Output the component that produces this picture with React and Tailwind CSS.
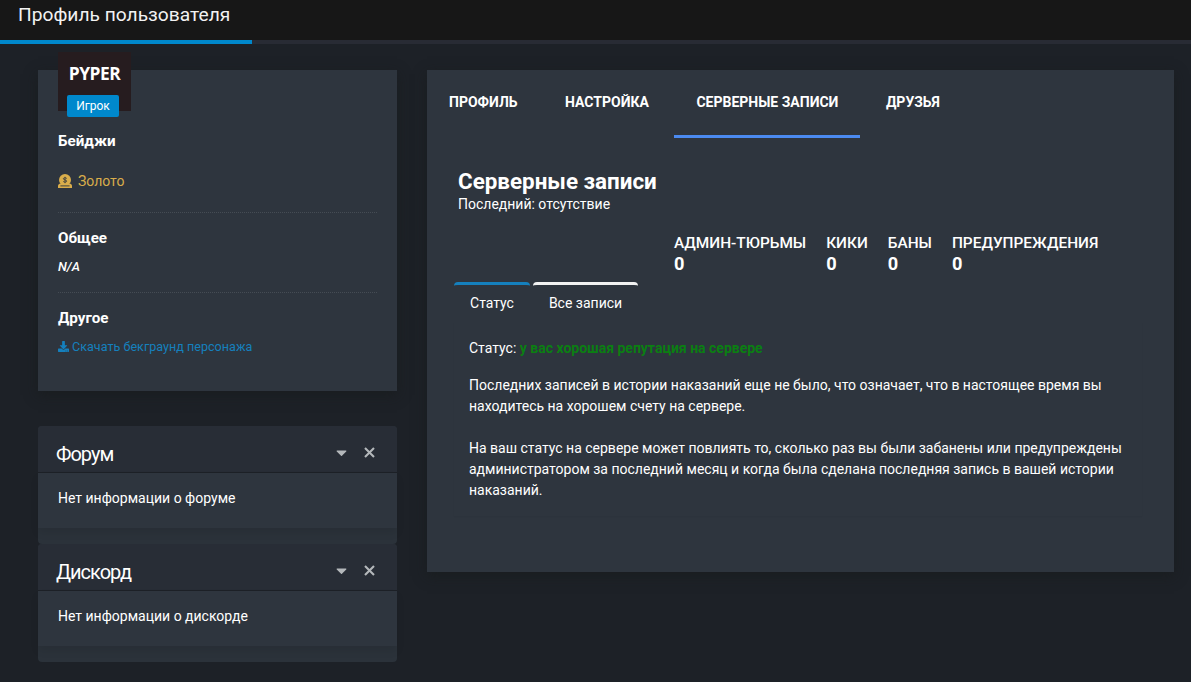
import React, { useState } from 'react';
import { FaDownload, FaCaretDown } from 'react-icons/fa';

const tabs = ['Профиль', 'Настройка', 'Серверные записи', 'Друзья'];

const stats = [
    { label: 'Админ-тюрьмы', value: 0 },
    { label: 'Кики', value: 0 },
    { label: 'Баны', value: 0 },
    { label: 'Предупреждения', value: 0 },
];

const GoldIcon = () => (
    <svg width="14" height="14" viewBox="0 0 14 14" fill="none">
        <path d="M1.2 9.8h11.6L14 11.2V14H0v-2.8z" fill="#d9ad4b" />
        <circle cx="7" cy="6" r="6" fill="#d9ad4b" />
        <path d="M2.4 11.9h9.2" stroke="#2e353e" strokeWidth="0.9" />
        <path d="M8.8 4.5C8.2 3.5 5.3 3.5 5.3 4.8c0 1.4 3.4.8 3.4 2.3 0 1.4-2.9 1.3-3.5.3M7 2.8v6.4" stroke="#2e353e" strokeWidth="0.8" />
    </svg>
);

const CloseIcon = () => (
    <svg width="11" height="11" viewBox="0 0 11 11" fill="none">
        <path d="M1 1l9 9M10 1l-9 9" stroke="currentColor" strokeWidth="2.1" />
    </svg>
);

const Panel = ({ title, children }) => (
    <section className="h-[118px] rounded bg-[#2b323a]">
        <header className="h-[47px] rounded-t border-b border-[#1d2127] bg-[#282d36] pl-[18px] pr-[22px] flex justify-between">
            <h2 className="pt-[15px] text-[20px] leading-[26px] tracking-[-1px]">{title}</h2>
            <div className="flex items-center gap-[14px] h-[53px] text-[#b4b8bb]">
                <FaCaretDown size={17} />
                <CloseIcon />
            </div>
        </header>
        <div className="h-[55px] bg-[#2e353e] px-5 pt-[15px] text-[14px] leading-[21px] shadow-[0_5px_8px_rgba(0,0,0,0.08)]">
            {children}
        </div>
    </section>
);

const App = () => {
    const [active, setActive] = useState('Серверные записи');

    return (
        <div className="h-[682px] overflow-hidden bg-[#1d2127] text-white font-['Roboto',sans-serif]">
            <header className="h-[44px] bg-[#171717] border-b-4 border-[#282b34] relative">
                <h1 className="pl-[18px] pt-px text-[19.2px] leading-[28px] text-[#f2f2f2]">Профиль пользователя</h1>
                <div className="absolute left-0 top-10 h-1 w-[252px] bg-[#0088cc]" />
            </header>

            <main className="flex gap-[30px] pl-[38px]">
                <aside className="w-[359px] pt-[26px]">
                    {/* User card */}
                    <section className="relative h-[321px] bg-[#2e353e] px-5 pt-[60px] shadow-[0_4px_12px_rgba(24,26,26,0.6)]">
                        <div className="absolute left-5 -top-[18px] w-[73px] h-[59px] bg-[#261c1f] flex justify-center pt-[9px]">
                            <strong className="text-[17.4px] leading-[24px] font-bold tracking-[-0.5px] font-['Open_Sans',sans-serif]">PYPER</strong>
                            <span className="absolute left-[9px] top-[43px] w-[52px] h-[22px] rounded-[2px] bg-[#0088cc] text-center text-[12px] leading-[22px]">Игрок</span>
                        </div>

                        <h3 className="text-[15.2px] leading-[22px] font-bold">Бейджи</h3>
                        <div className="mt-[18px] flex items-center gap-[6px] h-[22px] text-[14px] text-[#d9ad4b]">
                            <GoldIcon /> Золото
                        </div>

                        <hr className="mt-5 border-dotted border-[#454c54]" />

                        <h3 className="mt-[14px] text-[15.2px] leading-[22px] font-bold">Общее</h3>
                        <p className="mt-[8px] text-[12.8px] leading-[20px] font-medium italic">N/A</p>

                        <hr className="mt-[15px] border-dotted border-[#454c54]" />

                        <h3 className="mt-[14px] text-[15.2px] leading-[22px] font-bold">Другое</h3>
                        <a href="#" className="mt-[8px] flex items-center gap-[3px] text-[12.6px] leading-[20px] text-[#1580bd]">
                            <FaDownload size={11} className="mb-[2px]" /> Скачать бекграунд персонажа
                        </a>
                    </section>

                    <div className="mt-[35px]">
                        <Panel title="Форум">Нет информации о форуме</Panel>
                        <Panel title="Дискорд">Нет информации о дискорде</Panel>
                    </div>
                </aside>

                <section className="mt-[26px] w-[747px] h-[502px] bg-[#2e353e] shadow-[0_4px_12px_rgba(24,26,26,0.6)]">
                    <nav className="flex">
                        {tabs.map((tab) => (
                            <button
                                key={tab}
                                onClick={() => setActive(tab)}
                                className={`h-[68px] px-[22px] mr-[3.5px] border-b-3 text-[14px] font-bold uppercase ${
                                    active === tab ? 'border-[#4b8af0]' : 'border-transparent'
                                }`}
                            >
                                {tab}
                            </button>
                        ))}
                    </nav>

                    <div className="pl-[31px] pt-[28px]">
                        <h2 className="text-[22.4px] leading-[30px] font-bold">Серверные записи</h2>
                        <p className="-mt-px text-[14px] leading-[18px]">Последний: отсутствие</p>
                    </div>

                    {/* Punishment counters */}
                    <dl className="mt-[20px] pl-[247px] flex gap-5">
                        {stats.map((stat) => (
                            <div key={stat.label}>
                                <dt className="text-[15.4px] leading-[20px] font-medium uppercase">{stat.label}</dt>
                                <dd className="text-[18.2px] leading-[22px] font-bold">{stat.value}</dd>
                            </div>
                        ))}
                    </dl>

                    <div className="mt-[7px] pl-[27px] flex gap-[3px] text-[14px] leading-[21px]">
                        <button className="w-[76px] h-[40px] pb-[1px] border-t-3 border-[#1580bd] rounded-t">Статус</button>
                        <button className="w-[105px] h-[40px] pb-[1px] border-t-3 border-[#f2f2f2] rounded-t">Все записи</button>
                    </div>

                    <div className="ml-[27px] w-[688px] h-[194px] px-[15px] pt-[16px] text-[14px] leading-[21px] shadow-[0_1px_1px_rgba(0,0,0,0.03)]">
                        <p>
                            Статус: <strong className="font-bold text-[#0b7f12]">у вас хорошая репутация на сервере</strong>
                        </p>
                        <p className="mt-4">
                            Последних записей в истории наказаний еще не было, что означает, что в настоящее время вы<br />
                            находитесь на хорошем счету на сервере.
                        </p>
                        <p className="mt-[21px]">
                            На ваш статус на сервере может повлиять то, сколько раз вы были забанены или предупреждены<br />
                            администратором за последний месяц и когда была сделана последняя запись в вашей истории<br />
                            наказаний.
                        </p>
                    </div>
                </section>
            </main>
        </div>
    );
};

export default App;
